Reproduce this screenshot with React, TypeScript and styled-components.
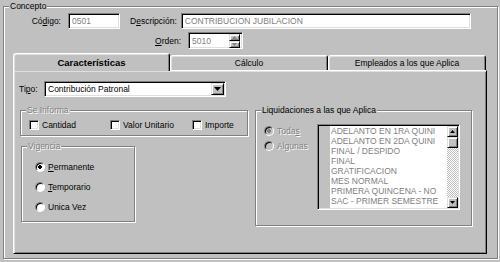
import React from "react";
import styled, { createGlobalStyle } from "styled-components";

const GlobalStyle = createGlobalStyle`
  html, body {
    margin: 0;
    padding: 0;
    background: #c0c0c0;
  }
  body {
    font-family: "Liberation Sans", Arial, sans-serif;
    font-size: 8.5px;
    color: #000;
  }
`;

const Window = styled.div`
  box-sizing: border-box;
  width: 500px;
  height: 262px;
  padding: 6px 2px 3px 3px;
  background: #c0c0c0;
  overflow: hidden;
`;

const Group = styled.div<{ $w?: number; $h: number; $mt?: number; $ml?: number }>`
  box-sizing: border-box;
  width: ${(p) => (p.$w ? `${p.$w}px` : "auto")};
  height: ${(p) => p.$h}px;
  margin-top: ${(p) => p.$mt ?? 0}px;
  margin-left: ${(p) => p.$ml ?? 0}px;
  border: 1px solid #808080;
  box-shadow: inset 1px 1px 0 #fff, 1px 1px 0 #fff;
  display: flex;
  flex-direction: column;
`;

const GroupTitle = styled.span<{ $disabled?: boolean }>`
  align-self: flex-start;
  margin: -6px 0 0 5px;
  padding: 0 1px;
  height: 11px;
  line-height: 11px;
  background: #c0c0c0;
  white-space: nowrap;
  color: ${(p) => (p.$disabled ? "#808080" : "#000")};
  text-shadow: ${(p) => (p.$disabled ? "1px 1px 0 #fff" : "none")};
`;

const FieldRow = styled.div<{ $mt: number; $h?: number }>`
  display: flex;
  align-items: center;
  height: ${(p) => p.$h ?? 16}px;
  margin-top: ${(p) => p.$mt}px;
`;

const Label = styled.span<{ $w?: number; $ml?: number; $mr: number }>`
  width: ${(p) => (p.$w ? `${p.$w}px` : "auto")};
  margin-left: ${(p) => p.$ml ?? 0}px;
  margin-right: ${(p) => p.$mr}px;
  text-align: right;
  white-space: nowrap;
`;

const TextBox = styled.div<{ $w: number; $h?: number; $dim?: boolean }>`
  box-sizing: border-box;
  width: ${(p) => p.$w}px;
  height: ${(p) => p.$h ?? 16}px;
  display: flex;
  align-items: center;
  padding: 0 1px 0 3px;
  background: #fff;
  border: 1px solid;
  border-color: #808080 #fff #fff #808080;
  box-shadow: inset 1px 1px 0 #000, inset -1px -1px 0 #dfdfdf;
  color: ${(p) => (p.$dim ? "#808080" : "#000")};
  white-space: nowrap;
  overflow: hidden;
`;

const BoxText = styled.span`
  flex: 1;
  overflow: hidden;
`;

const RaisedButton = styled.div<{ $w: number; $h: number }>`
  box-sizing: border-box;
  flex: none;
  width: ${(p) => p.$w}px;
  height: ${(p) => p.$h}px;
  display: flex;
  align-items: center;
  justify-content: center;
  background: #c0c0c0;
  border: 1px solid;
  border-color: #dfdfdf #000 #000 #dfdfdf;
  box-shadow: inset 1px 1px 0 #fff, inset -1px -1px 0 #808080;
`;

const SpinStack = styled.div`
  display: flex;
  flex-direction: column;
  margin-right: 1px;
`;

const Arrow = ({ down, color = "#000", w = 5 }: { down?: boolean; color?: string; w?: number }) => {
  const h = Math.ceil(w / 2);
  return (
    <svg width={w} height={h} viewBox={`0 0 ${w} ${h}`}>
      <polygon
        points={down ? `0,0 ${w},0 ${w / 2},${h}` : `${w / 2},0 ${w},${h} 0,${h}`}
        fill={color}
      />
    </svg>
  );
};

const TabControl = styled.div`
  display: flex;
  flex-direction: column;
  width: 474px;
  margin: 4px 0 0 9px;
`;

const TabStrip = styled.div`
  display: flex;
  align-items: flex-end;
  height: 17px;
`;

const Tab = styled.div<{ $active?: boolean; $w: number }>`
  box-sizing: border-box;
  position: relative;
  z-index: ${(p) => (p.$active ? 2 : 1)};
  width: ${(p) => p.$w}px;
  height: ${(p) => (p.$active ? 18 : 15)}px;
  margin-bottom: ${(p) => (p.$active ? -1 : 0)}px;
  display: flex;
  align-items: center;
  justify-content: center;
  padding-bottom: ${(p) => (p.$active ? 1 : 0)}px;
  background: #c0c0c0;
  border: 1px solid;
  border-bottom: none;
  border-color: #fff #000 transparent #fff;
  border-radius: 3px 3px 0 0;
  box-shadow: inset 1px 1px 0 #dfdfdf, inset -1px 0 0 #808080;
  font-weight: ${(p) => (p.$active ? 700 : 400)};
  font-size: ${(p) => (p.$active ? 9.5 : 8.5)}px;
  white-space: nowrap;
`;

const Panel = styled.div`
  box-sizing: border-box;
  height: 184px;
  display: flex;
  flex-direction: column;
  padding: 10px 0 0 5px;
  border: 1px solid;
  border-color: #fff #000 #000 #fff;
  box-shadow: inset 1px 1px 0 #dfdfdf, inset -1px -1px 0 #808080;
`;

const Columns = styled.div`
  display: grid;
  grid-template-columns: 228px 217px;
  column-gap: 7px;
  align-items: start;
  margin: 13px 0 0 1px;
`;

const LeftColumn = styled.div`
  display: flex;
  flex-direction: column;
`;

const CheckRow = styled.div`
  display: grid;
  grid-template-columns: 81px 82px auto;
  height: 11px;
  margin: 3px 0 0 8px;
`;

const Option = styled.label<{ $disabled?: boolean }>`
  display: flex;
  align-items: center;
  gap: 3px;
  height: 11px;
  white-space: nowrap;
  color: ${(p) => (p.$disabled ? "#808080" : "#000")};
  text-shadow: ${(p) => (p.$disabled ? "1px 1px 0 #fff" : "none")};
`;

const CheckBox = styled.span`
  box-sizing: border-box;
  flex: none;
  width: 10px;
  height: 10px;
  background: #fff;
  border: 1px solid;
  border-color: #808080 #fff #fff #808080;
  box-shadow: inset 1px 1px 0 #000, inset -1px -1px 0 #dfdfdf;
`;

const RadioDot = styled.span<{ $checked?: boolean; $disabled?: boolean }>`
  box-sizing: border-box;
  flex: none;
  width: 10px;
  height: 10px;
  border-radius: 50%;
  border: 1px solid;
  border-color: #808080 #fff #fff #808080;
  box-shadow: inset 1px 1px 0 #000;
  background-color: ${(p) => (p.$disabled ? "#c0c0c0" : "#fff")};
  background-image: ${(p) =>
    p.$checked
      ? `radial-gradient(circle, ${p.$disabled ? "#808080" : "#000"} 0 1.6px, transparent 2.1px)`
      : "none"};
`;

const RadioList = styled.div<{ $gap: number; $mt: number; $pl: number; $w?: number }>`
  display: flex;
  flex-direction: column;
  gap: ${(p) => p.$gap}px;
  margin-top: ${(p) => p.$mt}px;
  padding-left: ${(p) => p.$pl}px;
  width: ${(p) => (p.$w ? `${p.$w}px` : "auto")};
  flex: none;

  & > label {
    height: 12px;
  }
`;

const LiquidBody = styled.div`
  display: flex;
  align-items: flex-start;
  padding-left: 8px;
`;

const ListBox = styled.div`
  box-sizing: border-box;
  display: flex;
  width: 143px;
  height: 86px;
  margin-top: 8px;
  border: 1px solid;
  border-color: #808080 #fff #fff #808080;
  box-shadow: inset 1px 1px 0 #000, inset -1px -1px 0 #dfdfdf;
  padding: 1px;
`;

const Gutter = styled.div`
  width: 11px;
  background: #c0c0c0;
`;

const Items = styled.div`
  flex: 1;
  background: #fff;
  padding-left: 1px;
  overflow: hidden;
  color: #808080;
  line-height: 10px;
  white-space: nowrap;
`;

const ScrollBar = styled.div`
  width: 11px;
  display: flex;
  flex-direction: column;
`;

const Track = styled.div`
  flex: 1;
  background: repeating-conic-gradient(#c0c0c0 0 25%, #fff 0 50%) 0 0 / 2px 2px;
`;

const U = styled.span`
  text-decoration: underline;
`;

const liquidaciones = [
  "ADELANTO EN 1RA QUINI",
  "ADELANTO EN 2DA QUINI",
  "FINAL / DESPIDO",
  "FINAL",
  "GRATIFICACION",
  "MES NORMAL",
  "PRIMERA QUINCENA - NO",
  "SAC - PRIMER SEMESTRE",
];

export default function App() {
  return (
    <>
      <GlobalStyle />
      <Window>
        <Group $h={253}>
          <GroupTitle>Concepto</GroupTitle>

          <FieldRow $mt={1}>
            <Label $w={57} $mr={7}>
              Có<U>d</U>igo:
            </Label>
            <TextBox $w={52} $dim>
              <BoxText>0501</BoxText>
            </TextBox>
            <Label $ml={10} $mr={4}>
              D<U>e</U>scripción:
            </Label>
            <TextBox $w={290} $dim>
              <BoxText>CONTRIBUCION JUBILACION</BoxText>
            </TextBox>
          </FieldRow>

          <FieldRow $mt={3} $h={17}>
            <Label $w={177} $mr={7}>
              <U>O</U>rden:
            </Label>
            <TextBox $w={55} $h={17} $dim>
              <BoxText>5010</BoxText>
              <SpinStack>
                <RaisedButton $w={11} $h={7}>
                  <Arrow color="#808080" />
                </RaisedButton>
                <RaisedButton $w={11} $h={7}>
                  <Arrow down color="#808080" />
                </RaisedButton>
              </SpinStack>
            </TextBox>
          </FieldRow>

          <TabControl>
            <TabStrip>
              <Tab $active $w={157}>Características</Tab>
              <Tab $w={158}>Cálculo</Tab>
              <Tab $w={158}>Empleados a los que Aplica</Tab>
            </TabStrip>
            <Panel>
              <FieldRow $mt={0}>
                <Label $w={25} $mr={0} style={{ textAlign: "left" }}>
                  Ti<U>p</U>o:
                </Label>
                <TextBox $w={182}>
                  <BoxText>Contribución Patronal</BoxText>
                  <RaisedButton $w={13} $h={12}>
                    <Arrow down w={7} />
                  </RaisedButton>
                </TextBox>
              </FieldRow>

              <Columns>
                <LeftColumn>
                  <Group $w={228} $h={26}>
                    <GroupTitle $disabled>Se Informa</GroupTitle>
                    <CheckRow>
                      <Option>
                        <CheckBox />
                        Cantidad
                      </Option>
                      <Option>
                        <CheckBox />
                        Valor Unitario
                      </Option>
                      <Option>
                        <CheckBox />
                        Importe
                      </Option>
                    </CheckRow>
                  </Group>

                  <Group $w={114} $h={76} $mt={10} $ml={1}>
                    <GroupTitle $disabled>Vigencia</GroupTitle>
                    <RadioList $gap={8} $mt={9} $pl={13}>
                      <Option>
                        <RadioDot $checked />
                        <span>
                          <U>P</U>ermanente
                        </span>
                      </Option>
                      <Option>
                        <RadioDot />
                        <span>
                          <U>T</U>emporario
                        </span>
                      </Option>
                      <Option>
                        <RadioDot />
                        <span>Unica Vez</span>
                      </Option>
                    </RadioList>
                  </Group>
                </LeftColumn>

                <Group $w={217} $h={116}>
                  <GroupTitle>Liquidaciones a las que Aplica</GroupTitle>
                  <LiquidBody>
                    <RadioList $gap={3} $mt={9} $pl={0} $w={53}>
                      <Option $disabled>
                        <RadioDot $checked $disabled />
                        <span>
                          Toda<U>s</U>
                        </span>
                      </Option>
                      <Option $disabled>
                        <RadioDot $disabled />
                        <span>Algunas</span>
                      </Option>
                    </RadioList>
                    <ListBox>
                      <Gutter />
                      <Items>
                        {liquidaciones.map((l) => (
                          <div key={l}>{l}</div>
                        ))}
                      </Items>
                      <ScrollBar>
                        <RaisedButton $w={11} $h={11}>
                          <Arrow />
                        </RaisedButton>
                        <RaisedButton $w={11} $h={11} />
                        <Track />
                        <RaisedButton $w={11} $h={11}>
                          <Arrow down />
                        </RaisedButton>
                      </ScrollBar>
                    </ListBox>
                  </LiquidBody>
                </Group>
              </Columns>
            </Panel>
          </TabControl>
        </Group>
      </Window>
    </>
  );
}
